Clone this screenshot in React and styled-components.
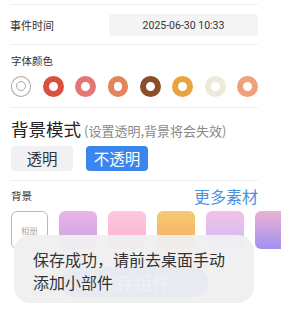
import React from "react";
import styled, { createGlobalStyle } from "styled-components";

const Global = createGlobalStyle`
  html, body { margin: 0; padding: 0; background: #fff; overflow: hidden; }
  body { font-family: Roboto, "Noto Sans CJK SC", sans-serif; color: #333; }
`;

const Page = styled.div`
  position: relative;
  width: 281px;
  height: 326px;
  overflow: hidden;
  padding: 4px 23px 0 10px;
  box-sizing: border-box;
`;

const Divider = styled.div`
  height: 1px;
  background: #f0f0f0;
`;

const Row = styled.div`
  display: flex;
  align-items: center;
  justify-content: space-between;
  margin: ${(p) => p.$m || "0"};
`;

const Label = styled.span`
  font-family: "Noto Sans CJK SC", sans-serif;
  font-size: ${(p) => p.$size || 10.5}px;
  line-height: 14px;
  color: #333;
`;

const DateBox = styled.div`
  width: 149px;
  height: 22px;
  border-radius: 3px;
  background: #f4f4f5;
  display: flex;
  align-items: center;
  justify-content: center;
  font-family: Roboto, sans-serif;
  font-size: 10.5px;
  color: #333;
`;

const Colors = styled.div`
  display: flex;
  gap: 11.5px;
  margin: 7.5px 0 10px 0.5px;
`;

const Ring = styled.div`
  width: 21px;
  height: 21px;
  border-radius: 50%;
  box-sizing: border-box;
  border: 6.5px solid ${(p) => p.$c};
  background: #fff;
`;

const EmptyRing = styled.div`
  width: 21px;
  height: 21px;
  border-radius: 50%;
  box-sizing: border-box;
  border: 1px solid #a8a8a8;
  display: flex;
  align-items: center;
  justify-content: center;
  &::after {
    content: "";
    width: 10px;
    height: 10px;
    border-radius: 50%;
    border: 1px solid #a8a8a8;
    box-sizing: border-box;
  }
`;

const Title = styled.div`
  margin: 10px 0 0 1px;
  height: 22px;
  display: flex;
  align-items: baseline;
  font-family: "Noto Sans CJK SC", sans-serif;
  font-size: 17.5px;
  line-height: 22px;
  color: #222;
`;

const Sub = styled.span`
  font-size: 13px;
  color: #8a8a8a;
  margin-left: 3px;
`;

const Toggles = styled.div`
  display: flex;
  gap: 13px;
  margin: 6px 0 9px 1px;
`;

const Toggle = styled.div`
  width: 62px;
  height: 25px;
  border-radius: 4px;
  display: flex;
  align-items: center;
  justify-content: center;
  font-family: "Noto Sans CJK SC", sans-serif;
  font-size: 15.5px;
  background: ${(p) => (p.$on ? "#3a86ee" : "#f1f1f4")};
  color: ${(p) => (p.$on ? "#fff" : "#333")};
`;

const More = styled.span`
  font-family: "Noto Sans CJK SC", sans-serif;
  font-size: 16px;
  line-height: 20px;
  color: #4a90e2;
`;

const Thumbs = styled.div`
  display: flex;
  gap: 11px;
  margin: 5px 0 0 1px;
`;

const Thumb = styled.div`
  flex: 0 0 38px;
  height: 38px;
  border-radius: 6px;
  box-sizing: border-box;
  background: ${(p) => p.$bg};
`;

const Album = styled(Thumb)`
  flex-basis: 37px;
  background: #fff;
  border: 1px solid #b8b8b8;
  display: flex;
  align-items: center;
  justify-content: center;
  font-family: "Noto Sans CJK SC", sans-serif;
  font-size: 8.5px;
  color: #aaa;
`;

const SaveButton = styled.div`
  margin: 18px auto 0;
  width: 148px;
  height: 30px;
  border-radius: 15px;
  background: #4e8ef0;
  color: #fff;
  display: flex;
  align-items: center;
  justify-content: center;
  font-family: "Noto Sans CJK SC", sans-serif;
  font-size: 18px;
`;

const Toast = styled.div`
  position: absolute;
  left: 14px;
  top: 235px;
  width: 240px;
  height: 68px;
  box-sizing: border-box;
  padding: 13px 19px 0;
  border-radius: 16px;
  background: rgba(239, 239, 240, 0.95);
  font-family: "Noto Sans CJK SC", sans-serif;
  font-size: 16px;
  line-height: 23px;
  color: #333;
`;

const ringColors = ["#d9503f", "#e57676", "#e2855a", "#8a4e2c", "#e9a43e", "#eee9da", "#f1a07c"];
const thumbBgs = [
  "linear-gradient(180deg, #e9b4ea 0%, #c9a2dd 100%)",
  "linear-gradient(180deg, #fdc8e3 0%, #f8b2c6 100%)",
  "linear-gradient(180deg, #f8ca72 0%, #f5ab62 100%)",
  "linear-gradient(180deg, #f2c2ea 0%, #cbbaf0 100%)",
  "linear-gradient(180deg, #eab2d2 0%, #a192f0 100%)",
];

export default function App() {
  return (
    <>
      <Global />
      <Page>
        <Divider />
        <Row $m="9px 0 8px">
          <Label $size={11}>事件时间</Label>
          <DateBox>2025-06-30 10:33</DateBox>
        </Row>
        <Divider />
        <Row $m="9px 0 0 1px">
          <Label>字体颜色</Label>
        </Row>
        <Colors>
          <EmptyRing />
          {ringColors.map((c) => (
            <Ring key={c} $c={c} />
          ))}
        </Colors>
        <Divider />
        <Title>
          背景模式<Sub>(设置透明,背景将会失效)</Sub>
        </Title>
        <Toggles>
          <Toggle>透明</Toggle>
          <Toggle $on>不透明</Toggle>
        </Toggles>
        <Divider />
        <Row $m="5px 0 0 1px">
          <Label>背景</Label>
          <More>更多素材</More>
        </Row>
        <Thumbs>
          <Album>相册</Album>
          {thumbBgs.map((b) => (
            <Thumb key={b} $bg={b} />
          ))}
        </Thumbs>
        <SaveButton>保存组件</SaveButton>
        <Toast>保存成功，请前去桌面手动添加小部件</Toast>
      </Page>
    </>
  );
}
